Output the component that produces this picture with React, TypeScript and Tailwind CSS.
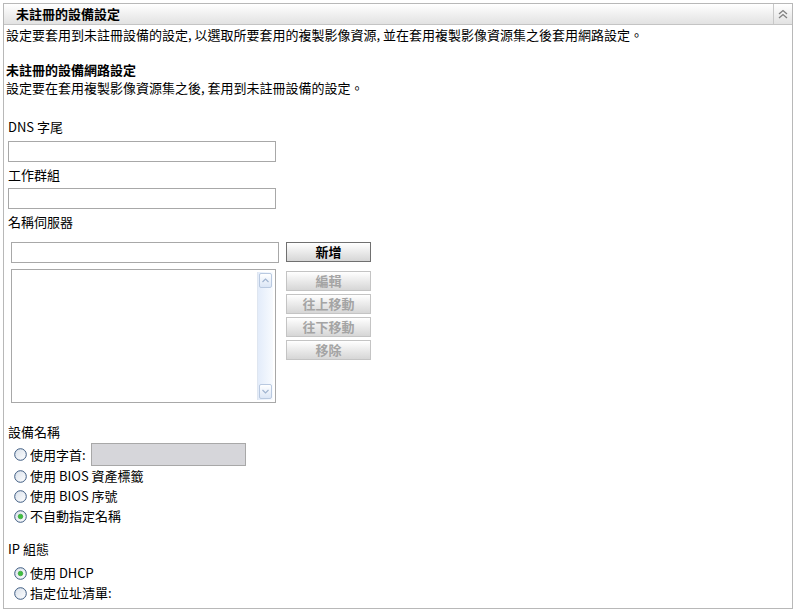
import React from "react";

const font = { fontFamily: '"Noto Sans CJK TC", "DejaVu Sans", sans-serif' };

function Radio({ checked }: { checked?: boolean }) {
  return (
    <svg width="13" height="13" viewBox="0 0 13 13" className="shrink-0">
      <defs>
        <linearGradient id={checked ? "rg1" : "rg0"} x1="0" y1="0" x2="1" y2="1">
          <stop offset="0" stopColor="#d8e0ea" />
          <stop offset="1" stopColor="#ffffff" />
        </linearGradient>
      </defs>
      <circle cx="6.5" cy="6.5" r="5.8" fill={`url(#${checked ? "rg1" : "rg0"})`} stroke="#3c5a80" strokeWidth="1" />
      {checked && <circle cx="6.5" cy="6.5" r="2.3" fill="#3fbf3f" stroke="#2a9a2a" strokeWidth="0.6" />}
    </svg>
  );
}

function RadioRow({ label, checked }: { label: string; checked?: boolean }) {
  return (
    <div className="flex items-center h-[20px] pl-[6px]">
      <Radio checked={checked} />
      <span className="ml-[3px]">{label}</span>
    </div>
  );
}

function Btn({ label, disabled }: { label: string; disabled?: boolean }) {
  return (
    <div
      className={`w-[85px] h-[20px] flex items-center justify-center font-bold border bg-gradient-to-b from-white to-[#d6d6d6] ${
        disabled ? "border-[#c4c4c4] text-[#a4a4a4]" : "border-[#707070] text-black"
      }`}
    >
      {label}
    </div>
  );
}

function TextBox({ w, mt }: { w: string; mt: string }) {
  return <div className={`${w} ${mt} h-[21px] border border-[#a8a8a8] bg-white`} />;
}

export default function App() {
  return (
    <div className="w-[797px] h-[614px] bg-white text-[13px] leading-[18px] text-black overflow-hidden" style={font}>
      <div className="ml-[3px] mt-[3px] w-[790px] h-[606px] border border-[#b8b8b8] overflow-hidden">
        {/* header */}
        <div className="h-[21px] flex items-center border-b border-[#c4c4c4] bg-gradient-to-b from-white to-[#e2e2e2]">
          <span className="pl-[12px] font-bold flex-1">未註冊的設備設定</span>
          <div className="h-full w-[19px] border-l border-[#c8c8c8] flex items-center justify-center">
            <svg width="10" height="10" viewBox="0 0 10 10">
              <path d="M1 5 L5 1.5 L9 5" fill="none" stroke="#808080" strokeWidth="1.3" />
              <path d="M1 9 L5 5.5 L9 9" fill="none" stroke="#808080" strokeWidth="1.3" />
            </svg>
          </div>
        </div>

        <div className="pl-[2px]">
          <p className="mt-[1px]">設定要套用到未註冊設備的設定, 以選取所要套用的複製影像資源, 並在套用複製影像資源集之後套用網路設定。</p>
          <p className="mt-[17px] font-bold">未註冊的設備網路設定</p>
          <p>設定要在套用複製影像資源集之後, 套用到未註冊設備的設定。</p>

          <div className="pl-[2px]">
            <p className="mt-[21px]">DNS 字尾</p>
            <TextBox w="w-[268px]" mt="mt-[5px]" />
            <p className="mt-[4px]">工作群組</p>
            <TextBox w="w-[268px]" mt="mt-[4px]" />
            <p className="mt-[4px]">名稱伺服器</p>

            <div className="pl-[3px] mt-[11px]">
              <div className="flex items-start gap-[7px]">
                <div className="w-[268px] h-[21px] border border-[#a8a8a8] bg-white" />
                <Btn label="新增" />
              </div>
              <div className="flex items-start gap-[10px] mt-[6px]">
                <div className="w-[265px] h-[134px] border border-[#a8a8a8] bg-white flex justify-end p-[2px]">
                  <div className="w-[16px] h-full flex flex-col bg-gradient-to-r from-[#e3ecfa] to-[#f8fbff] border-l border-[#dfe6f0]">
                    <div className="h-[15px] mx-[1px] mt-[1px] border border-[#b9c9e0] rounded-[2px] bg-gradient-to-b from-white to-[#dbe6f6] flex items-center justify-center">
                      <svg width="7" height="5" viewBox="0 0 7 5">
                        <path d="M0.5 4 L3.5 1 L6.5 4" fill="none" stroke="#a0b4d0" strokeWidth="1.2" />
                      </svg>
                    </div>
                    <div className="flex-1" />
                    <div className="h-[15px] mx-[1px] mb-[1px] border border-[#b9c9e0] rounded-[2px] bg-gradient-to-b from-white to-[#dbe6f6] flex items-center justify-center">
                      <svg width="7" height="5" viewBox="0 0 7 5">
                        <path d="M0.5 1 L3.5 4 L6.5 1" fill="none" stroke="#a0b4d0" strokeWidth="1.2" />
                      </svg>
                    </div>
                  </div>
                </div>
                <div className="flex flex-col gap-[3px] mt-[2px]">
                  <Btn label="編輯" disabled />
                  <Btn label="往上移動" disabled />
                  <Btn label="往下移動" disabled />
                  <Btn label="移除" disabled />
                </div>
              </div>
            </div>

            <p className="mt-[20px]">設備名稱</p>
            <div className="mt-[2px]">
              <div className="flex items-center h-[23px] pl-[6px]">
                <Radio />
                <span className="ml-[3px]">使用字首:</span>
                <div className="ml-[5px] w-[155px] h-[23px] border border-[#a8a8a8] bg-[#d6d6da]" />
              </div>
              <RadioRow label="使用 BIOS 資產標籤" />
              <RadioRow label="使用 BIOS 序號" />
              <RadioRow label="不自動指定名稱" checked />
            </div>

            <p className="mt-[14px]">IP 組態</p>
            <div className="mt-[5px]">
              <RadioRow label="使用 DHCP" checked />
              <RadioRow label="指定位址清單:" />
            </div>
          </div>
        </div>
      </div>
    </div>
  );
}
